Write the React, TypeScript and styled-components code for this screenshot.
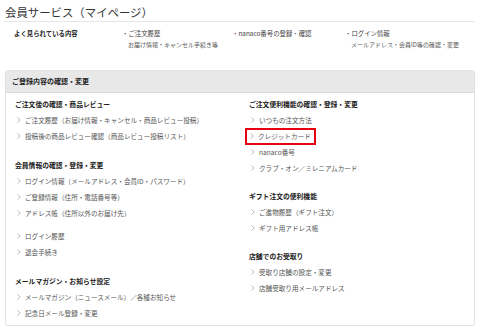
import styled, { createGlobalStyle } from "styled-components";

const GlobalStyle = createGlobalStyle`
  html, body {
    margin: 0;
    padding: 0;
    background: #fff;
  }
  body {
    font-family: "Noto Sans CJK JP", "Noto Sans", "Liberation Sans", sans-serif;
    color: #333;
  }
`;

type LinkItem = {
  label: string;
  highlight?: boolean;
  spaced?: boolean;
};

type Section = {
  title: string;
  items: LinkItem[];
};

const leftSections: Section[] = [
  {
    title: "ご注文後の確認・商品レビュー",
    items: [
      { label: "ご注文履歴（お届け情報・キャンセル・商品レビュー投稿）" },
      { label: "投稿後の商品レビュー確認（商品レビュー投稿リスト）" },
    ],
  },
  {
    title: "会員情報の確認・登録・変更",
    items: [
      { label: "ログイン情報（メールアドレス・会員ID・パスワード）" },
      { label: "ご登録情報（住所・電話番号等）" },
      { label: "アドレス帳（住所以外のお届け先）" },
      { label: "ログイン履歴", spaced: true },
      { label: "退会手続き" },
    ],
  },
  {
    title: "メールマガジン・お知らせ設定",
    items: [
      { label: "メールマガジン（ニュースメール）／各種お知らせ" },
      { label: "記念日メール登録・変更" },
    ],
  },
];

const rightSections: Section[] = [
  {
    title: "ご注文便利機能の確認・登録・変更",
    items: [
      { label: "いつもの注文方法" },
      { label: "クレジットカード", highlight: true },
      { label: "nanaco番号" },
      { label: "クラブ・オン／ミレニアムカード" },
    ],
  },
  {
    title: "ギフト注文の便利機能",
    items: [{ label: "ご進物履歴（ギフト注文）" }, { label: "ギフト用アドレス帳" }],
  },
  {
    title: "店舗でのお受取り",
    items: [{ label: "受取り店舗の設定・変更" }, { label: "店舗受取り用メールアドレス" }],
  },
];

function Chevron() {
  return (
    <ChevronIcon width="4" height="6" viewBox="0 0 4 6">
      <path d="M0.5 0.5 L3.2 3 L0.5 5.5" fill="none" stroke="#aaa" strokeWidth="0.8" />
    </ChevronIcon>
  );
}

function SectionBlock({ section }: { section: Section }) {
  return (
    <SectionWrap>
      <SectionTitle>{section.title}</SectionTitle>
      {section.items.map((item) => (
        <ItemRow key={item.label} $spaced={item.spaced}>
          <ItemLink $highlight={item.highlight}>
            <Chevron />
            <span>{item.label}</span>
          </ItemLink>
        </ItemRow>
      ))}
    </SectionWrap>
  );
}

function App() {
  return (
    <>
      <GlobalStyle />
      <Page>
        <PageTitle>会員サービス（マイページ）</PageTitle>
        <Popular>
          <PopularLabel>よく見られている内容</PopularLabel>
          <PopularItem>
            <PopularMain>・ご注文履歴</PopularMain>
            <PopularSub>お届け情報・キャンセル手続き等</PopularSub>
          </PopularItem>
          <PopularItem>
            <PopularMain>・nanaco番号の登録・確認</PopularMain>
          </PopularItem>
          <PopularItem>
            <PopularMain>・ログイン情報</PopularMain>
            <PopularSub>メールアドレス・会員ID等の確認・変更</PopularSub>
          </PopularItem>
        </Popular>

        <Panel>
          <PanelHeader>ご登録内容の確認・変更</PanelHeader>
          <PanelBody>
            <Column $gap={13}>
              {leftSections.map((s) => (
                <SectionBlock key={s.title} section={s} />
              ))}
            </Column>
            <Column $gap={12}>
              {rightSections.map((s) => (
                <SectionBlock key={s.title} section={s} />
              ))}
            </Column>
          </PanelBody>
        </Panel>
      </Page>
    </>
  );
}

const Page = styled.div`
  width: 480px;
  height: 331px;
  padding: 0 5px;
  box-sizing: border-box;
  overflow: hidden;
`;

const PageTitle = styled.h1`
  margin: 0;
  padding: 5px 0 0 0;
  height: 16px;
  font-size: 11.4px;
  font-weight: normal;
  line-height: 14px;
  color: #333;
  border-bottom: 1px solid #e6e6e6;
`;

const Popular = styled.div`
  display: grid;
  grid-template-columns: 108px 110px 113px 1fr;
  padding: 7px 0 0 9px;
  height: 48px;
  box-sizing: border-box;
`;

const PopularLabel = styled.div`
  font-size: 6.4px;
  font-weight: bold;
  color: #222;
  line-height: 10px;
`;

const PopularItem = styled.div`
  display: flex;
  flex-direction: column;
`;

const PopularMain = styled.div`
  font-size: 6.4px;
  line-height: 10px;
  color: #444;
`;

const PopularSub = styled.div`
  font-size: 6px;
  line-height: 10px;
  padding-left: 6px;
  margin-top: 1px;
  color: #555;
`;

const Panel = styled.div`
  border: 1px solid #e2e2e2;
  border-radius: 3px;
  height: 256px;
  box-sizing: border-box;
  overflow: hidden;
`;

const PanelHeader = styled.div`
  height: 21px;
  background: #e8e8e8;
  border-bottom: 1px solid #dcdcdc;
  font-size: 7px;
  font-weight: bold;
  color: #222;
  line-height: 21px;
  padding-left: 6px;
`;

const PanelBody = styled.div`
  display: grid;
  grid-template-columns: 234px 1fr;
  padding: 3px 10px 0 9px;
`;

const Column = styled.div<{ $gap: number }>`
  display: flex;
  flex-direction: column;
  gap: ${(p) => p.$gap}px;
`;

const SectionWrap = styled.div`
  display: flex;
  flex-direction: column;
`;

const SectionTitle = styled.div`
  font-size: 6.8px;
  font-weight: bold;
  color: #222;
  line-height: 16px;
`;

const ItemRow = styled.div<{ $spaced?: boolean }>`
  height: 16px;
  display: flex;
  align-items: center;
  margin-top: ${(p) => (p.$spaced ? "7px" : "0")};
`;

const ItemLink = styled.div<{ $highlight?: boolean }>`
  display: inline-flex;
  align-items: center;
  gap: 4px;
  font-size: 6.6px;
  color: #555;
  line-height: 11px;
  padding: ${(p) => (p.$highlight ? "1px 3px 1px 3px" : "0 0 0 2px")};
  margin-left: ${(p) => (p.$highlight ? "-4px" : "0")};
  border: ${(p) => (p.$highlight ? "2px solid #e60012" : "none")};
`;

const ChevronIcon = styled.svg`
  flex: 0 0 auto;
  display: block;
`;

export default App;
